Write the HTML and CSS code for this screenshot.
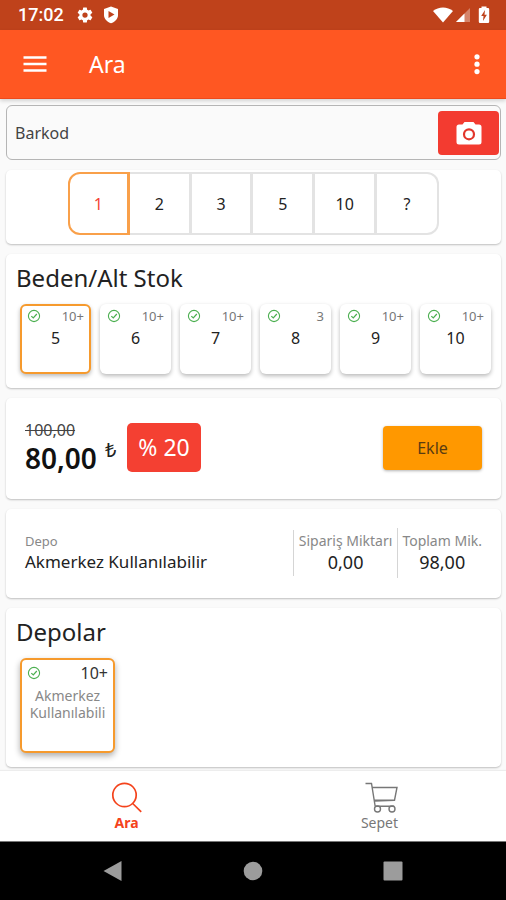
FILE: index.html
```html
<!DOCTYPE html>
<html lang="tr">
<head>
<meta charset="utf-8">
<meta name="viewport" content="width=device-width, initial-scale=1">
<title>Ara</title>
<link rel="stylesheet" href="styles.css">
</head>
<body>
<svg class="defs" aria-hidden="true">
  <symbol id="check" viewBox="0 0 14 14">
    <circle cx="7" cy="7" r="5.6" fill="none" stroke="currentColor" stroke-width="1.1"/>
    <path d="M4.3 7.1l2 1.9 3.5-4" fill="none" stroke="currentColor" stroke-width="1.2"/>
  </symbol>
</svg>

<div class="status">
  <span class="clock">17:02</span>
  <svg class="gear" viewBox="0 0 24 24" width="18" height="18"><path fill="#fff" fill-rule="evenodd" d="M19.4 13a7.500 7.500 0 0 0 0-2l2.100-1.650a.5.5 0 0 0 .12-.64l-2-3.460a.5.5 0 0 0-.61-.22l-2.490 1a7.300 7.300 0 0 0-1.690-.98l-.38-2.650A.5.5 0 0 0 14 2h-4a.5.5 0 0 0-.49.42l-.38 2.650c-.61.25-1.170.59-1.690.98l-2.490-1a.5.5 0 0 0-.61.22l-2 3.460a.5.5 0 0 0 .12.64L4.570 11a7.900 7.900 0 0 0 0 2l-2.110 1.650a.5.5 0 0 0-.12.64l2 3.460c.12.22.39.3.61.22l2.490-1c.52.4 1.080.73 1.690.98l.38 2.650c.03.24.24.4.49.4h4c.25 0 .46-.18.49-.42l.38-2.650c.61-.25 1.170-.59 1.690-.98l2.490 1c.23.09.49 0 .61-.22l2-3.460a.5.5 0 0 0-.12-.64zM12 15.500a3.500 3.500 0 1 1 0-7 3.500 3.500 0 0 1 0 7z"/></svg>
  <svg class="shield" viewBox="0 0 16 18" width="16" height="18"><path fill="#fff" d="M8 .5l7 2.500v6c0 4-3 6.800-7 8.300-4-1.500-7-4.300-7-8.300V3z"/><path fill="#bf421b" d="M5.500 5l6 3.500-6 3.500z"/></svg>
  <span class="spacer"></span>
  <svg class="wifi" viewBox="0 0 20 16" width="20" height="16"><path fill="#fff" d="M0 4C5.500-.8 14.500-.8 20 4L10 15.500z"/></svg>
  <svg class="signal" viewBox="0 0 16 16" width="16" height="16"><path fill="#fff" opacity=".35" d="M15 1v14H1z"/><path fill="#fff" d="M9.500 6.500V15H1z"/></svg>
  <svg class="battery" viewBox="0 0 12 18" width="12" height="18"><path fill="#fff" d="M3.500.5h5V2H10q1.200 0 1.200 1.200v12.600Q11.200 17 10 17H2Q.8 17 .8 15.800V3.200Q.8 2 2 2h1.500z"/><path fill="#bf421b" d="M7 4L3.200 10h2.300L5 15l3.900-6.200H6.500z"/></svg>
</div>

<header class="appbar">
  <button class="menu" aria-label="Menü"><svg viewBox="0 0 24 18" width="24" height="18"><path stroke="#fff" stroke-width="2.500" d="M.5 2.500h23M.5 9h23M.5 15.500h23"/></svg></button>
  <h1>Ara</h1>
  <button class="more" aria-label="Diğer"><svg viewBox="0 0 8 22" width="8" height="22"><g fill="#fff"><circle cx="4" cy="3.800" r="2.600"/><circle cx="4" cy="11.200" r="2.600"/><circle cx="4" cy="18.600" r="2.600"/></g></svg></button>
</header>

<main>
  <form class="search">
    <input type="text" placeholder="Barkod" aria-label="Barkod">
    <button type="button" class="camera" aria-label="Kamera"><svg viewBox="0 0 26 24" width="26" height="24"><path fill="#fff" d="M8.500 1h9l2 2.500H23q2.500 0 2.500 2.500v15q0 2.500-2.500 2.500H3Q.5 23.500.5 21V6Q.5 3.500 3 3.500h3.500z"/><circle cx="13" cy="13.300" r="5" fill="#fff" stroke="#e2352b" stroke-width="2.200"/></svg></button>
  </form>

  <section class="card quantity">
    <div class="segments">
      <button class="on">1</button><button>2</button><button>3</button><button>5</button><button>10</button><button>?</button>
    </div>
  </section>

  <section class="card sizes">
    <h2>Beden/Alt Stok</h2>
    <div class="size-list">
      <button class="tile on"><span class="top"><svg class="ok"><use href="#check"/></svg><small>10+</small></span><b>5</b></button>
      <button class="tile"><span class="top"><svg class="ok"><use href="#check"/></svg><small>10+</small></span><b>6</b></button>
      <button class="tile"><span class="top"><svg class="ok"><use href="#check"/></svg><small>10+</small></span><b>7</b></button>
      <button class="tile"><span class="top"><svg class="ok"><use href="#check"/></svg><small>3</small></span><b>8</b></button>
      <button class="tile"><span class="top"><svg class="ok"><use href="#check"/></svg><small>10+</small></span><b>9</b></button>
      <button class="tile"><span class="top"><svg class="ok"><use href="#check"/></svg><small>10+</small></span><b>10</b></button>
    </div>
  </section>

  <section class="card price">
    <div class="amounts">
      <s>100,00</s>
      <div class="now"><strong>80,00</strong><span>₺</span></div>
    </div>
    <span class="discount">% 20</span>
    <button class="add">Ekle</button>
  </section>

  <section class="card stock">
    <div class="depot"><span class="label">Depo</span><span class="name">Akmerkez Kullanılabilir</span></div>
    <div class="figure"><span class="label">Sipariş Miktarı</span><span class="value">0,00</span></div>
    <div class="figure total"><span class="label">Toplam Mik.</span><span class="value">98,00</span></div>
  </section>

  <section class="card depots">
    <h2>Depolar</h2>
    <button class="tile on depot-tile"><span class="top"><svg class="ok"><use href="#check"/></svg><small>10+</small></span><span class="depot-name">Akmerkez Kullanılabili</span></button>
  </section>
</main>

<nav class="tabs">
  <a href="#ara" class="current"><svg viewBox="0 0 32 32" width="32" height="32" fill="none" stroke="currentColor" stroke-width="1.700"><circle cx="13.500" cy="13" r="11.700"/><path d="M21.700 21.500l8.500 8.300"/></svg><span>Ara</span></a>
  <a href="#sepet"><svg viewBox="0 0 36 32" width="36" height="32" fill="none" stroke="currentColor" stroke-width="1.400"><path d="M3.500 1.500h6l3.700 23M10 5.500h25l-2.500 12.700H12M32.500 18.200l-20 .9M13.200 24.300h19"/><circle cx="15.500" cy="27" r="3"/><circle cx="30" cy="27" r="3"/></svg><span>Sepet</span></a>
</nav>

<footer class="system">
  <button aria-label="Geri"><svg viewBox="0 0 20 22" width="20" height="22"><path fill="#9c9c9c" d="M18.500 1v20L.5 11z"/></svg></button>
  <button aria-label="Ana ekran"><svg viewBox="0 0 20 20" width="20" height="20"><circle cx="10" cy="10" r="9.300" fill="#9c9c9c"/></svg></button>
  <button aria-label="Son uygulamalar"><svg viewBox="0 0 20 20" width="20" height="20"><rect x=".5" y=".5" width="19" height="19" rx="1" fill="#9c9c9c"/></svg></button>
</footer>
</body>
</html>
```
FILE: styles.css
```css
* { box-sizing: border-box; }

body {
  margin: 0;
  min-height: 100vh;
  display: flex;
  flex-direction: column;
  background: #fafafa;
  color: #222;
  font-family: "Noto Sans", "Open Sans", sans-serif;
  font-size: 16px;
  line-height: 20px;
}

button, input {
  font: inherit;
  color: inherit;
  border: 0;
  padding: 0;
  background: none;
}

svg { display: block; flex: none; }
.defs { position: absolute; width: 0; height: 0; }

.status {
  display: flex;
  align-items: center;
  height: 30px;
  padding: 0 16px 0 18px;
  background: #bf421b;
  color: #fff;
}
.clock { font: 500 18px/30px Roboto, sans-serif; }
.gear { margin-left: 12px; }
.shield { margin-left: 9px; }
.spacer { flex: 1; }
.signal { margin-left: 2px; }
.battery { margin-left: 7px; }

.appbar {
  display: flex;
  align-items: center;
  height: 69px;
  padding: 0 25px 0 23px;
  background: #ff5722;
  border-bottom: 1px solid #ed4a1c;
  box-shadow: 0 2px 4px rgba(0, 0, 0, .16);
  color: #fff;
}
.appbar h1 {
  flex: 1;
  margin: 0 0 0 42px;
  font-size: 23px;
  line-height: 32px;
  font-weight: 400;
}

main {
  flex: 1;
  display: flex;
  flex-direction: column;
  gap: 10px;
  padding: 6px 5px 4px 6px;
}

.search {
  display: flex;
  align-items: center;
  height: 55px;
  padding: 0 1px 0 8px;
  border: 1px solid #b5b5b5;
  border-radius: 6px;
}
.search input {
  flex: 1;
  min-width: 0;
  height: 40px;
  outline: 0;
}
.search input::placeholder { color: #444; opacity: 1; }
.camera {
  display: grid;
  place-items: center;
  width: 61px;
  height: 44px;
  border-radius: 4px;
  background: #f33b30;
}

.card {
  background: #fff;
  border-radius: 5px;
  box-shadow: 0 1px 2px rgba(0, 0, 0, .24);
}
.card h2 {
  margin: 0;
  font-size: 24px;
  line-height: 32px;
  font-weight: 400;
}

.quantity { padding: 2px 62px 9px; }
.segments {
  display: grid;
  grid-template-columns: repeat(6, 1fr);
}
.segments button {
  height: 63px;
  border: 2px solid #e3e3e3;
  border-left-width: 0;
  border-right-width: 3px;
}
.segments button:first-child { border-radius: 12px 0 0 12px; border-left-width: 2px; }
.segments button:last-child { border-radius: 0 12px 12px 0; border-right-width: 2px; }
.segments .on { border-color: #f9a04a; color: #f44336; }

.sizes { padding: 8px 10px 14px; }
.size-list {
  display: grid;
  grid-template-columns: repeat(6, 1fr);
  gap: 9px;
  margin: 10px 0 0 4px;
}
.tile {
  display: flex;
  flex-direction: column;
  height: 70px;
  padding: 1px 5px;
  border: 2px solid transparent;
  border-radius: 6px;
  background: #fff;
  box-shadow: 0 2px 4px rgba(0, 0, 0, .28);
}
.tile.on { border-color: #f69a2d; }
.top {
  display: flex;
  justify-content: space-between;
  align-items: center;
  width: 100%;
  color: #777;
}
.top small { font-size: 13px; line-height: 18px; }
.tile b { width: 100%; font-weight: 400; line-height: 26px; }
.ok { width: 14px; height: 14px; color: #4caf50; }

.price {
  display: flex;
  align-items: center;
  min-height: 101px;
  padding: 0 19px 2px;
}
.amounts { display: flex; flex-direction: column; }
.amounts s { font-size: 16px; line-height: 20px; color: #444; }
.now { display: flex; gap: 8px; align-items: flex-start; }
.now strong { font-size: 28px; line-height: 36px; font-weight: 600; color: #111; }
.now span { font-size: 20px; line-height: 20px; }
.discount {
  margin-left: 11px;
  padding: 8px 11px;
  border-radius: 5px;
  background: #f44032;
  color: #fff;
  font-size: 23px;
  line-height: 33px;
}
.add {
  width: 99px;
  height: 44px;
  margin-left: auto;
  border-radius: 4px;
  background: #ff9800;
  color: #5a3c12;
  box-shadow: 0 1px 3px rgba(0, 0, 0, .3);
}

.stock {
  display: flex;
  align-items: center;
  min-height: 89px;
  padding: 0 15px 2px 19px;
}
.depot, .figure { display: flex; flex-direction: column; }
.depot { flex: 1; }
.label { color: #888; font-size: 14px; line-height: 18px; white-space: nowrap; }
.name { font-size: 17px; line-height: 24px; }
.depot .label { font-size: 13px; }
.figure { align-items: center; padding: 2px 5px; border-left: 1px solid #d5d5d5; }
.total { padding: 4px; }
.value { font-size: 18px; line-height: 24px; }

.depots { padding: 8px 10px 14px; }
.depot-tile {
  width: 95px;
  height: 95px;
  margin: 10px 0 0 4px;
  padding: 3px 5px;
  box-shadow: 0 3px 6px rgba(0, 0, 0, .32);
}
.depot-tile .top { color: #333; }
.depot-tile small { font-size: 16px; line-height: 20px; }
.depot-name { width: 100%; margin-top: 4px; color: #888; font-size: 14px; line-height: 17px; }

.tabs {
  display: flex;
  height: 70px;
  background: #fff;
  box-shadow: 0 -1px 1px rgba(0, 0, 0, .05);
}
.tabs a {
  flex: 1;
  display: flex;
  flex-direction: column;
  align-items: center;
  padding-top: 11px;
  color: #777;
  font-size: 14px;
  line-height: 18px;
  text-decoration: none;
}
.tabs .current { color: #f4431c; font-weight: 700; }

.system {
  display: flex;
  justify-content: center;
  align-items: center;
  gap: 120px;
  height: 59px;
  background: #000;
  border-top: 1px solid #777;
}
```
